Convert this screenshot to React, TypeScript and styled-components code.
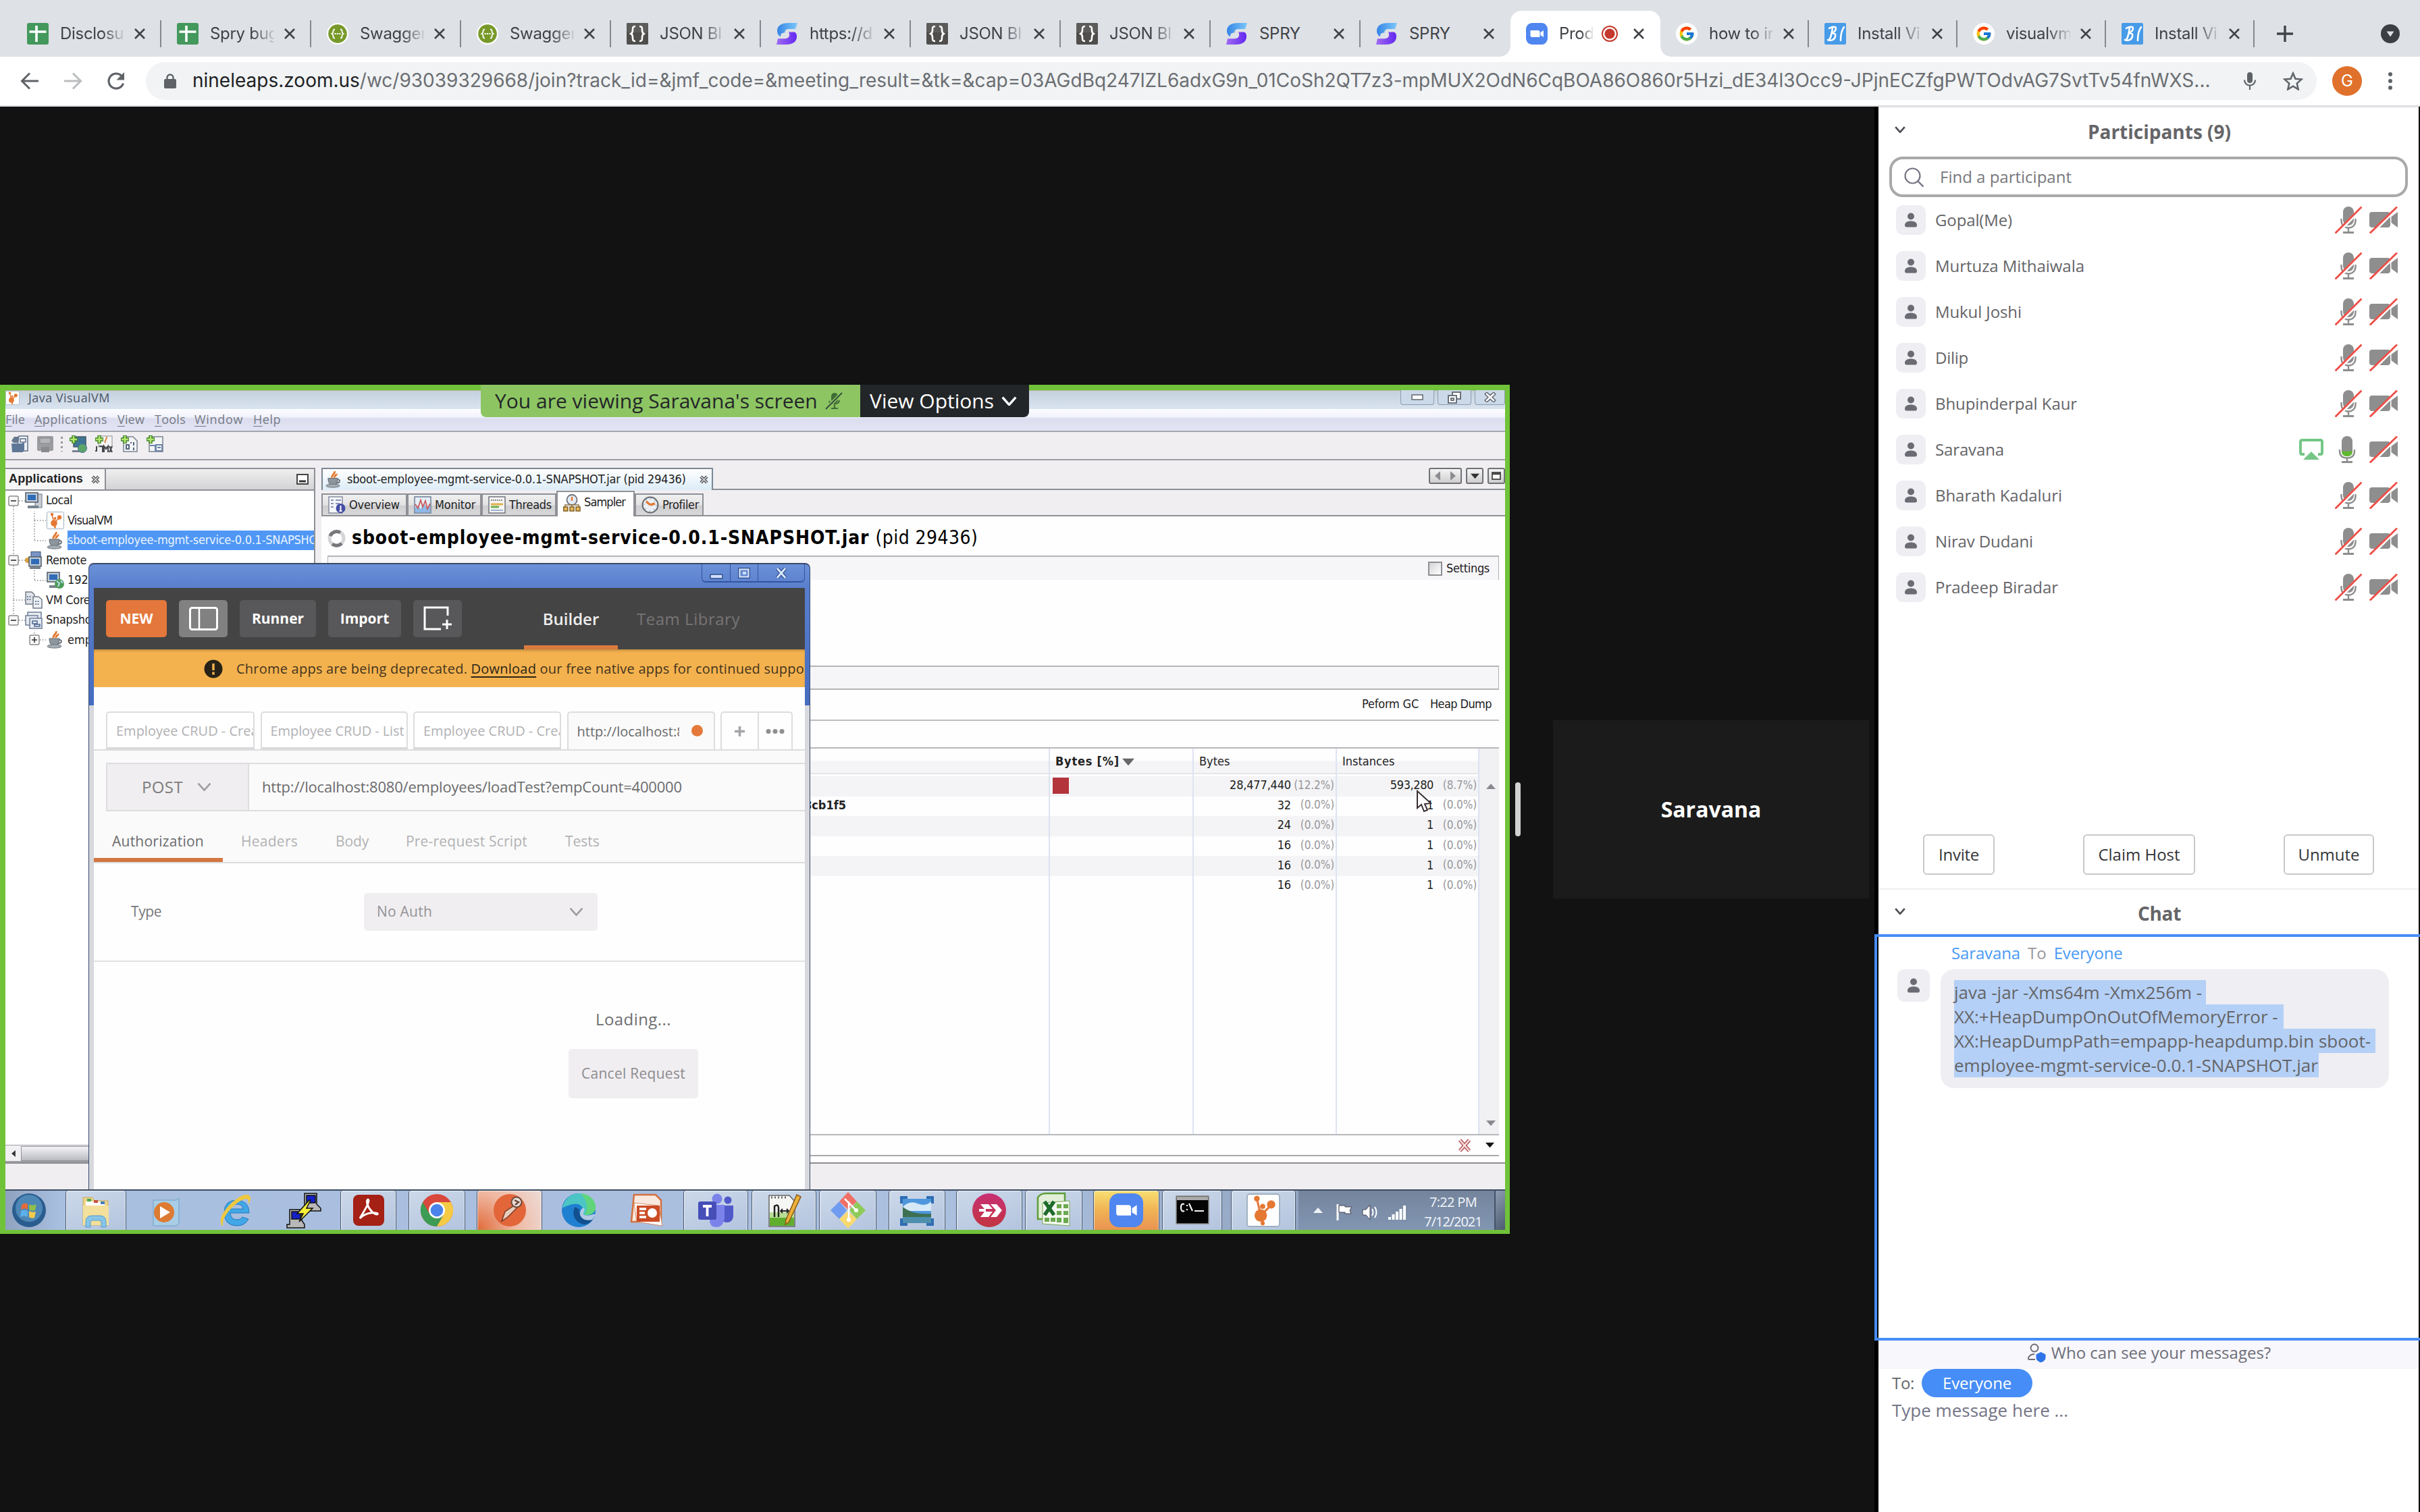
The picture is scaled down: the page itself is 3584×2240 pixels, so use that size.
import React from "react";
import styled, { createGlobalStyle, css } from "styled-components";
import { FcGoogle } from "react-icons/fc";

const OPEN = `"Open Sans", "Noto Sans", sans-serif`;
const CHROME = `Inter, Roboto, sans-serif`;
const SWING = `"DejaVu Sans Condensed", "DejaVu Sans", sans-serif`;
const ARIAL = `"Liberation Sans", Arial, sans-serif`;

const GlobalStyle = createGlobalStyle`
  * { box-sizing: border-box; }
  body { margin: 0; background: #121212; font-family: ${OPEN}; }
  svg { display: block; flex: none; }
`;

/* ---------- shared text ---------- */
const Label = styled.span<{ $size: number; $ls?: number; $weight?: number; $color?: string; $font?: string }>`
  display: inline-block;
  white-space: pre;
  padding-bottom: 2px;
  font-family: ${(p) => p.$font ?? "inherit"};
  font-size: ${(p) => p.$size}px;
  font-weight: ${(p) => p.$weight ?? 400};
  letter-spacing: ${(p) => p.$ls ?? 0}px;
  color: ${(p) => p.$color ?? "inherit"};
`;

/* ---------- browser chrome ---------- */
const Page = styled.div`
  width: 3584px;
  height: 2240px;
  display: flex;
  flex-direction: column;
  overflow: hidden;
  background: #121212;
`;
const TabStrip = styled.div`
  height: 84px;
  flex: none;
  background: #dee1e6;
  display: flex;
  padding: 16px 0 0 17px;
`;
const Tab = styled.div<{ $active?: boolean; $w: number }>`
  position: relative;
  width: ${(p) => p.$w}px;
  height: 68px;
  padding-left: 23px;
  display: flex;
  align-items: center;
  color: #3f4347;
  font-family: ${CHROME};
  ${(p) =>
    p.$active &&
    css`
      background: #fff;
      border-radius: 16px 16px 0 0;
      &::before, &::after {
        content: "";
        position: absolute;
        bottom: 0;
        width: 16px;
        height: 16px;
      }
      &::before { left: -16px; background: radial-gradient(circle at 0 0, transparent 15.5px, #fff 16px); }
      &::after { right: -16px; background: radial-gradient(circle at 100% 0, transparent 15.5px, #fff 16px); }
    `}
`;
const TabText = styled.div<{ $w: number; $fade?: boolean }>`
  width: ${(p) => p.$w}px;
  margin-left: 17px;
  overflow: hidden;
  white-space: pre;
  ${(p) => p.$fade && "mask-image: linear-gradient(90deg, #000 66%, transparent 104%);"}
`;
const TabExtra = styled.div<{ $ml: number }>`
  margin-left: ${(p) => p.$ml}px;
`;
const TabLine = styled.div`
  width: 2px;
  height: 40px;
  background: #85888c;
  margin-left: auto;
`;
const Toolbar = styled.div`
  height: 74px;
  flex: none;
  background: #fff;
  border-bottom: 2px solid #dadce0;
  display: flex;
  align-items: center;
  padding-left: 28px;
`;
const NavIcons = styled.div`
  display: flex;
  gap: 32px;
  width: 188px;
`;
const UrlBar = styled.div`
  width: 3215px;
  height: 56px;
  border-radius: 28px;
  background: #f1f3f4;
  display: flex;
  align-items: center;
  padding-left: 27px;
  font-family: ${CHROME};
  color: #6b6e73;
  b { font-weight: 400; color: #202124; }
`;
const UrlText = styled.div`
  width: 3037px;
  margin-left: 24px;
`;
const UrlStar = styled.div`
  margin-left: 39px;
`;
const Avatar = styled.div`
  width: 44px;
  height: 44px;
  margin: 0 38px 0 23px;
  border-radius: 50%;
  background: #e0712c;
  color: #fff;
  display: grid;
  place-items: center;
  font-family: ${CHROME};
`;

const CloseX = () => (
  <svg width="18" height="18" viewBox="0 0 18 18"><path d="M2 2l14 14M16 2L2 16" stroke="#3f4347" strokeWidth="2.6" /></svg>
);
const SheetIcon = () => (
  <svg width="32" height="32"><rect width="32" height="32" rx="3" fill="#43985c" /><path d="M14 4v24M3.500 13h25" stroke="#fff" strokeWidth="3.600" /></svg>
);
const SwaggerIcon = () => (
  <svg width="32" height="32"><circle cx="16" cy="16" r="16" fill="#fff" /><circle cx="16" cy="16" r="13.800" fill="#78992a" /><path d="M12 9.500c-2.500 0-2.500 1-2.500 3s0 2.500-2 3.500c2 1 2 1.500 2 3.500s0 3 2.500 3M20 9.500c2.500 0 2.500 1 2.500 3s0 2.500 2 3.500c-2 1-2 1.500-2 3.500s0 3-2.500 3" fill="none" stroke="#fff" strokeWidth="1.900" /><path d="M11.500 16h9" stroke="#fff" strokeWidth="2.200" strokeDasharray="2.200 1.200" /></svg>
);
const JsonIcon = () => (
  <svg width="32" height="32"><rect width="32" height="32" rx="2" fill="#4f4e4c" /><rect width="32" height="14" rx="2" fill="#5c5c5a" /><path d="M13 5c-4 0-4 2-4 5.500 0 3.500-.5 4.500-2.500 5.500 2 1 2.500 2 2.500 5.500C9 25 9 27 13 27M19 5c4 0 4 2 4 5.500 0 3.500.5 4.500 2.500 5.500-2 1-2.500 2-2.500 5.500 0 3.500 0 5.500-4 5.500" fill="none" stroke="#fff" strokeWidth="2.600" /></svg>
);
const SpryIcon = () => (
  <svg width="32" height="32" viewBox="0 0 32 32">
    <defs>
      <linearGradient id="sa" x1="0" x2="1"><stop offset="0" stopColor="#3584e4" /><stop offset="1" stopColor="#7cc8fb" /></linearGradient>
      <linearGradient id="sb" x1="0" x2="1"><stop offset="0" stopColor="#a06cf0" /><stop offset="1" stopColor="#6327f2" /></linearGradient>
    </defs>
    <path d="M31 0H18C7 0 1 4 1 12c0 4 2 6.500 5 8.500V19c0-3 2-4.500 6-4.500 1-3 1-5 5-5.500h11z" fill="url(#sa)" />
    <path d="M0 32h14c10 0 16-4 16-12 0-4-1-5.500-3.500-6.500H18c2 3 2 9.500-5 9.700H2z" fill="url(#sb)" />
  </svg>
);
const ZoomIcon = ({ s = 32 }: { s?: number }) => (
  <svg width={s} height={s} viewBox="0 0 32 32"><rect width="32" height="32" rx="9" fill="#4f86f0" /><path d="M6.500 11h11.500a2.500 2.500 0 0 1 2.500 2.500V21H9a2.500 2.500 0 0 1-2.500-2.500zM21.500 14l4.500-3v10l-4.500-3z" fill="#fff" /></svg>
);
const GoogleIcon = () => (
  <svg width="32" height="32"><circle cx="16" cy="16" r="16" fill="#fff" /><g transform="translate(3.500 3.500)"><FcGoogle size={25} /></g></svg>
);
const BlIcon = () => (
  <svg width="32" height="32"><rect width="32" height="32" rx="2" fill="#479be8" /><path d="M7 8c3-2 10-4 10 0 0 3-3 6-6 7 4 0 6 1 5 5-1 5-6 7-11 5M12 7c-1 8-2 14-5 18M29 6c-3 4-5 11-5 20" fill="none" stroke="#fff" strokeWidth="2.600" strokeLinecap="round" /></svg>
);
const RecIcon = () => (
  <svg width="24" height="24"><circle cx="12" cy="12" r="11" fill="none" stroke="#c4392c" strokeWidth="2" /><circle cx="12" cy="12" r="7.600" fill="#c4392c" /></svg>
);

const tabs: { icon: React.ReactNode; text: string; active?: boolean; w?: number; line?: boolean }[] = [
  { icon: <SheetIcon />, text: "Disclosu", line: true },
  { icon: <SheetIcon />, text: "Spry bug", line: true },
  { icon: <SwaggerIcon />, text: "Swagger", line: true },
  { icon: <SwaggerIcon />, text: "Swagger", line: true },
  { icon: <JsonIcon />, text: "JSON Bl", line: true },
  { icon: <SpryIcon />, text: "https://d", line: true },
  { icon: <JsonIcon />, text: "JSON Bl", line: true },
  { icon: <JsonIcon />, text: "JSON Bl", line: true },
  { icon: <SpryIcon />, text: "SPRY", line: true },
  { icon: <SpryIcon />, text: "SPRY" },
  { icon: <ZoomIcon />, text: "Prod", active: true },
  { icon: <GoogleIcon />, text: "how to in", w: 220, line: true },
  { icon: <BlIcon />, text: "Install Vi", w: 220, line: true },
  { icon: <GoogleIcon />, text: "visualvm", w: 220, line: true },
  { icon: <BlIcon />, text: "Install Vi", w: 220, line: true },
];

function BrowserTop() {
  return (
    <>
      <TabStrip>
        {tabs.map((t, i) => (
          <Tab key={i} $active={t.active} $w={t.w ?? 222}>
            {t.icon}
            <TabText $w={t.active ? 50 : 95} $fade={t.text !== "SPRY"}><Label $size={24} $ls={-0.3}>{t.text}</Label></TabText>
            {t.active && <TabExtra $ml={13}><RecIcon /></TabExtra>}
            <TabExtra $ml={t.active ? 22 : 14}><CloseX /></TabExtra>
            {t.line && <TabLine />}
          </Tab>
        ))}
        <Tab $w={200}>
          <TabExtra $ml={9}><svg width="26" height="26" viewBox="0 0 26 26"><path d="M13 1v24M1 13h24" stroke="#3f4347" strokeWidth="3.400" /></svg></TabExtra>
          <TabExtra $ml={129}><svg width="28" height="28" viewBox="0 0 28 28"><circle cx="14" cy="14" r="14" fill="#3b3f44" /><path d="M8.500 10.500h11L14 18.500z" fill="#dee1e6" /></svg></TabExtra>
        </Tab>
      </TabStrip>
      <Toolbar>
        <NavIcons>
          <svg width="32" height="32" viewBox="0 0 32 32"><path d="M29 16H5M16 4.500L4.500 16 16 27.500" fill="none" stroke="#5f6368" strokeWidth="3" /></svg>
          <svg width="32" height="32" viewBox="0 0 32 32"><path d="M3 16h24M16 4.500L27.500 16 16 27.500" fill="none" stroke="#babcbe" strokeWidth="3" /></svg>
          <svg width="32" height="32" viewBox="0 0 32 32"><path d="M26.500 19.500A11 11 0 1 1 23.800 8.200" fill="none" stroke="#5f6368" strokeWidth="3.200" /><path d="M28 3v11.500H16.500z" fill="#5f6368" /></svg>
        </NavIcons>
        <UrlBar>
          <svg width="18" height="22" viewBox="0 0 18 22"><rect x="0" y="8" width="18" height="14" rx="2" fill="#5f6368" /><path d="M4.500 9V6a4.500 4.500 0 0 1 9 0v3" fill="none" stroke="#5f6368" strokeWidth="2.400" /></svg>
          <UrlText>
            <Label $size={28}><b>nineleaps.zoom.us</b>/wc/93039329668/join?track_id=&amp;jmf_code=&amp;meeting_result=&amp;tk=&amp;cap=03AGdBq247lZL6adxG9n_01CoSh2QT7z3-mpMUX2OdN6CqBOA86O860r5Hzi_dE34l3Occ9-JPjnECZfgPWTOdvAG7SvtTv54fnWXS...</Label>
          </UrlText>
          <svg width="20" height="28" viewBox="0 0 20 28"><rect x="6" y="1" width="8" height="16" rx="4" fill="#5f6368" /><path d="M2 12.500a8 8 0 0 0 16 0M10 20.500V27" fill="none" stroke="#5f6368" strokeWidth="2.200" /></svg>
          <UrlStar>
            <svg width="30" height="28" viewBox="0 0 30 28"><path d="M15 2.500l3.500 8.300 9 .8-6.800 6 2 8.800L15 21.700l-7.700 4.700 2-8.800-6.800-6 9-.8z" fill="none" stroke="#5f6368" strokeWidth="2.500" /></svg>
          </UrlStar>
        </UrlBar>
        <Avatar><Label $size={24}>G</Label></Avatar>
        <svg width="8" height="28" viewBox="0 0 8 28"><g fill="#5f6368"><circle cx="4" cy="4" r="3" /><circle cx="4" cy="14" r="3" /><circle cx="4" cy="24" r="3" /></g></svg>
      </Toolbar>
    </>
  );
}

/* ---------- stage ---------- */
const Meeting = styled.div`
  flex: 1;
  display: flex;
  min-height: 0;
`;
const Stage = styled.div`
  width: 2776px;
  display: flex;
  align-items: center;
  background: #121212;
`;
const Handle = styled.div`
  width: 8px;
  height: 80px;
  border-radius: 4px;
  background: #d2d2d2;
  margin-left: 8px;
`;
const Tile = styled.div`
  width: 468px;
  height: 264px;
  margin-left: 48px;
  background: #1b1b1b;
  color: #fff;
  display: grid;
  place-items: center;
`;
const Share = styled.div`
  position: relative;
  width: 2236px;
  height: 1258px;
  flex: none;
  border: solid #70c239;
  border-width: 8px 7px 6px 8px;
`;
const Desktop = styled.div`
  position: relative;
  width: 2221px;
  height: 1244px;
  overflow: hidden;
  display: flex;
  flex-direction: column;
  background: #f0eef1;
  color: #222;
  font-family: ${SWING};
`;
const Banner = styled.div`
  position: absolute;
  top: -8px;
  left: 704px;
  display: flex;
  height: 48px;
  border-radius: 0 0 8px 8px;
  overflow: hidden;
`;
const BannerGreen = styled.div`
  width: 562px;
  background: #8dc563;
  color: #232628;
  display: flex;
  align-items: center;
  padding-left: 21px;
  gap: 11px;
`;
const BannerDark = styled.div`
  width: 250px;
  background: #232628;
  color: #fff;
  display: flex;
  align-items: center;
  padding-left: 14px;
  gap: 11px;
`;

/* ---------- VisualVM ---------- */
const WinTitle = styled.div`
  height: 28px;
  flex: none;
  background: linear-gradient(#c3d0dc, #dae4f1);
  display: flex;
  align-items: center;
  color: #4c5665;
  gap: 13px;
  padding-bottom: 5px;
  box-shadow: inset 0 1px 0 #b4b98a;
`;
const WinButtons = styled.div`
  margin-left: auto;
  display: flex;
  gap: 5px;
  align-self: flex-start;
`;
const WinButton = styled.div<{ $w: number }>`
  width: ${(p) => p.$w}px;
  height: 22px;
  border: 1.5px solid #8c9bb0;
  border-top: 0;
  border-radius: 0 0 4px 4px;
  background: #ccd9e8;
  display: grid;
  place-items: center;
`;
const MenuBar = styled.div`
  height: 34px;
  flex: none;
  display: grid;
  grid-template-columns: 43px 123px 55px 59px 87px 60px;
  align-items: center;
  background: linear-gradient(#fdfdff, #f2f3fb 35%, #dcdef0 45%, #e3e4f4);
  border-bottom: 2px solid #a5a5ac;
  color: #767b85;
  font-family: ${OPEN};
  u { text-underline-offset: 3px; }
`;
const IconBar = styled.div`
  height: 42px;
  flex: none;
  display: flex;
  align-items: center;
  gap: 12px;
  padding: 0 0 4px 8px;
  border-bottom: 2px solid #9d9da3;
`;
const IconDivider = styled.div`
  width: 3px;
  height: 22px;
  margin: 0 -2px;
  background: repeating-linear-gradient(#97979b 0 3px, transparent 3px 7px);
`;
const Body = styled.div`
  height: 1040px;
  flex: none;
  display: flex;
  gap: 9px;
  padding-top: 11px;
`;
const SidePanel = styled.div`
  width: 459px;
  background: #fff;
  border: solid #8e9096;
  border-width: 2px 2px 0 0;
  display: flex;
  flex-direction: column;
`;
const SideHead = styled.div`
  height: 32px;
  flex: none;
  display: flex;
  align-items: center;
  border-bottom: 2px solid #8e9096;
  background: linear-gradient(#efeff0, #d3d3d5);
  padding-right: 8px;
  justify-content: space-between;
`;
const SideTab = styled.div`
  width: 149px;
  height: 30px;
  padding-left: 5px;
  background: #f6f6f7;
  border-right: 2px solid #8e9096;
  display: flex;
  align-items: center;
  gap: 12px;
`;
const Tree = styled.div`
  flex: 1;
`;
const TreeRow = styled.div`
  height: 29.5px;
  display: flex;
  align-items: center;
  overflow: hidden;
`;
const TreeText = styled.div<{ $on?: boolean }>`
  margin-left: 5px;
  flex: 1;
  height: 29px;
  line-height: 28px;
  overflow: hidden;
  white-space: pre;
  background: ${(p) => (p.$on ? "#5097f5" : "transparent")};
  color: ${(p) => (p.$on ? "#eaf4ff" : "#1e1e1e")};
`;
const SideScroll = styled.div`
  height: 26px;
  display: flex;
  align-items: center;
  gap: 6px;
  padding-left: 7px;
  background: #f0f0f3;
  border: solid #9d9da3;
  border-width: 1px 0 2px;
`;
const Thumb = styled.div`
  height: 22px;
  flex: 1;
  border: 1px solid #8f9196;
  background: linear-gradient(#f4f4f6, #b9bbc2);
`;
const MainPanel = styled.div`
  flex: 1;
  display: flex;
  flex-direction: column;
`;
const DocTabs = styled.div`
  height: 33px;
  flex: none;
  display: flex;
  align-items: stretch;
  border-bottom: 2px solid #8e9096;
`;
const DocTab = styled.div`
  width: 580px;
  height: 33px;
  border: solid #7a8794;
  border-width: 2px 2px 0 2px;
  background: linear-gradient(#fff, #dcecf8);
  display: flex;
  align-items: center;
  padding: 0 5px 0 4px;
`;
const DocTitle = styled.div`
  margin: 0 auto 0 7px;
`;
const DocNav = styled.div`
  margin-left: auto;
  display: flex;
  gap: 6px;
`;
const DocBtn = styled.div<{ $w: number }>`
  width: ${(p) => p.$w}px;
  height: 24px;
  border: 2px solid #6f7176;
  border-radius: 3px;
  background: linear-gradient(#f4f4f4, #cfcfd1);
  display: flex;
  align-items: center;
  justify-content: space-around;
`;
const SubTabs = styled.div`
  height: 39px;
  flex: none;
  display: flex;
  align-items: flex-end;
  border-bottom: 2px solid #8e9096;
`;
const SubTab = styled.div<{ $w: number; $on?: boolean }>`
  width: ${(p) => p.$w}px;
  height: ${(p) => (p.$on ? 38 : 32)}px;
  margin-bottom: ${(p) => (p.$on ? -2 : 0)}px;
  border: 2px solid #8e9096;
  border-bottom: 0;
  background: ${(p) => (p.$on ? "#fefefe" : "linear-gradient(#f0f0f0, #e2e2e3 50%, #cfcfd1 55%, #d8d8d9)")};
  display: flex;
  align-items: center;
  gap: 5px;
  padding: 0 0 ${(p) => (p.$on ? 5 : 0)}px 8px;
`;
const Content = styled.div`
  flex: 1;
  background: #fefefe;
  padding: 0 9px;
  display: flex;
  flex-direction: column;
`;
const Heading = styled.div`
  height: 58px;
  display: flex;
  align-items: center;
  gap: 9px;
  color: #000;
  padding-top: 6px;
`;
const GreyBar = styled.div<{ $h: number; $gap: number; $closed?: boolean }>`
  height: ${(p) => p.$h}px;
  margin-bottom: ${(p) => p.$gap}px;
  background: #f6f5f8;
  border: solid #b4b4b8;
  border-width: 2px 1px ${(p) => (p.$closed ? 2 : 0)}px;
  display: flex;
  align-items: center;
  justify-content: flex-end;
  gap: 6px;
  padding-right: 13px;
`;
const CheckBox = styled.div`
  width: 21px;
  height: 21px;
  border: 2px solid #8f9094;
  background: linear-gradient(135deg, #d4d4d6, #fff);
`;
const Actions = styled.div`
  height: 46px;
  border-bottom: 2px solid #bdbdc0;
  display: flex;
  align-items: center;
  justify-content: flex-end;
  gap: 17px;
  padding: 0 11px 1px 0;
  margin-bottom: 39px;
`;
const Table = styled.div`
  height: 575px;
  display: flex;
  border: solid #b8b8bc;
  border-width: 2px 0;
`;
const Cols = styled.div`
  display: flex;
  flex-direction: column;
  width: 1706px;
`;
const Line = styled.div<{ $odd?: boolean; $head?: boolean; $fill?: boolean }>`
  display: grid;
  grid-template-columns: 1070px 213px 212px 211px;
  height: ${(p) => (p.$head ? 41 : 29.6)}px;
  ${(p) => p.$fill && "flex: 1;"}
  background: ${(p) => (p.$odd ? "#f4f4f6" : "#fefefe")};
  ${(p) => p.$head && "background: linear-gradient(#fefefe 40%, #f3f3f6 50%, #f6f6f8 88%, #d8d8dc 90%, #fefefe 94%);"}
`;
const Cell = styled.div<{ $end?: boolean }>`
  display: flex;
  align-items: center;
  gap: ${(p) => (p.$end ? 0 : 4)}px;
  justify-content: ${(p) => (p.$end ? "flex-end" : "flex-start")};
  padding: 0 ${(p) => (p.$end ? 2 : 0)}px 2px 8px;
  border-right: 2px solid #dde3f1;
  overflow: hidden;
`;
const ClassName = styled.div`
  margin-left: 698px;
`;
const Num = styled.div`
  text-align: right;
`;
const Pct = styled.div`
  width: 64px;
  text-align: right;
  color: #97979b;
`;
const RedBlock = styled.div`
  width: 24px;
  height: 24px;
  margin-left: -4px;
  background: #b4343c;
`;
const VScroll = styled.div`
  flex: 1;
  background: #f1f0f3;
  display: flex;
  flex-direction: column;
  justify-content: space-between;
  align-items: center;
  padding: 49px 0 9px 4px;
`;
const FilterRow = styled.div`
  height: 31px;
  display: flex;
  align-items: center;
  justify-content: flex-end;
  gap: 21px;
  padding-right: 7px;
  border-bottom: 2px solid #a8a8ac;
`;
const StatusBar = styled.div`
  height: 40px;
  flex: none;
  border-top: 2px solid #8e8e92;
  background: #f0eef1;
`;
const Pointer = styled.div`
  position: absolute;
  left: 2089px;
  top: 592px;
`;

const Tri = ({ d = "down", c = "#777", s = 14 }: { d?: string; c?: string; s?: number }) => {
  const p: Record<string, string> = { down: "M0 3h14l-7 8z", up: "M0 11h14L7 3z", left: "M11 0v14L3 7z", right: "M3 0v14l8-7z" };
  return <svg width={s} height={s} viewBox="0 0 14 14"><path d={p[d]} fill={c} /></svg>;
};
const GreyX = () => (
  <svg width="13" height="13" viewBox="0 0 13 13"><path d="M2 2l9 9M11 2l-9 9" stroke="#55575b" strokeWidth="4.500" /><path d="M2 2l9 9M11 2l-9 9" stroke="#ddd" strokeWidth="1.500" /></svg>
);
const JavaCup = ({ s = 26 }: { s?: number }) => (
  <svg width={s} height={s} viewBox="0 0 26 26">
    <path d="M14 0c2 4-5 5-4 10M17 4c1 2-4 3-3 6" stroke="#e4792f" strokeWidth="3" fill="none" />
    <path d="M4 11h15c0 6-2 10-5 10H9c-3 0-5-5-5-10z" fill="#8d959d" stroke="#5c646c" />
    <path d="M18 13c6-1 5 6-2 5" fill="none" stroke="#6c747c" strokeWidth="2" />
    <ellipse cx="11.500" cy="22.500" rx="10.500" ry="2.600" fill="#a5adb4" stroke="#6c747c" />
  </svg>
);
const VvmIcon = ({ s = 26 }: { s?: number }) => (
  <svg width={s} height={s} viewBox="0 0 26 26">
    <rect x=".5" y=".5" width="25" height="25" rx="2" fill="#fff" stroke="#9fb0c0" />
    <path d="M8 4l3 13 8-8M11 17l2 6" stroke="#e2793d" strokeWidth="1.600" fill="none" />
    <g fill="#e57832"><circle cx="8" cy="4" r="2.200" /><circle cx="19" cy="8.500" r="3.200" /><circle cx="12.500" cy="10" r="2" /><circle cx="11" cy="17" r="4.800" /><circle cx="12.500" cy="23" r="1.600" /></g>
  </svg>
);
const Monitor = ({ extra }: { extra?: "globe" | "pc" | "net" }) => (
  <svg width="26" height="26" viewBox="0 0 26 26">
    {extra === "pc" && <rect x="15" y="3" width="10" height="20" fill="#c7cdd3" stroke="#6d757d" />}
    {extra === "net" && <g><rect x="9" y="0.500" width="14" height="9" fill="#7a95c8" stroke="#3c4c6a" /><circle cx="4" cy="13" r="4" fill="#d9a03f" /></g>}
    <rect x={extra === "net" ? 6 : 1} y={extra === "net" ? 8 : 1} width="18" height="14" fill="#c2ccd6" stroke="#4c5866" strokeWidth="1.500" />
    <rect x={extra === "net" ? 9 : 4} y={extra === "net" ? 11 : 4} width="12" height="8" fill="#2f6cb8" />
    <path d={extra === "net" ? "M7 23h16v3H7z" : "M4 20h16v4H4z"} fill="#77828d" />
    {extra === "globe" && <g><circle cx="19" cy="18" r="7" fill="#4b9a58" /><path d="M15 14l4 3-2 5M21 13l3 4" stroke="#bfe0f0" strokeWidth="2" fill="none" /></g>}
  </svg>
);
const Pages = () => (
  <svg width="26" height="26" viewBox="0 0 26 26"><path d="M1 1h9l4 4v14H1z" fill="#dfe3e9" stroke="#737c88" strokeWidth="1.500" /><path d="M12 8h8l5 4v13H12z" fill="#eef1f4" stroke="#737c88" strokeWidth="1.500" /><path d="M15 15h7M15 19h7M3 8h7M3 12h7" stroke="#6d7f9b" strokeWidth="2" strokeDasharray="2 1.500" /></svg>
);
const Snaps = () => (
  <svg width="26" height="26" viewBox="0 0 26 26"><g fill="#e6ebf3" stroke="#6f7d96" strokeWidth="1.500"><rect x="4" y="1" width="20" height="14" /><rect x="1" y="6" width="18" height="14" /><rect x="7" y="10" width="18" height="15" /></g><path d="M11 14h7v4h-7zM14 19h8v3h-8z" fill="none" stroke="#4e668f" strokeWidth="1.500" /></svg>
);
const BarIcon = ({ kind }: { kind: number }) => (
  <svg width="26" height="26" viewBox="0 0 26 26">
    {kind === 0 && <g><path d="M1 8l4-6h7l2 3v6H4z" fill="#67788f" /><path d="M12 1h13v22H9z" fill="#eef1f5" stroke="#61728b" strokeWidth="1.500" /><path d="M14 5h8v5h-8z" fill="none" stroke="#61728b" strokeWidth="1.500" /><path d="M1 12h15l4-2v13l-3 2H2z" fill="#5f7797" /></g>}
    {kind === 1 && <g><rect x="1" y="1" width="24" height="22" rx="2" fill="#9c9da1" /><path d="M5 4h16v8H5z" fill="#b4b5b9" stroke="#85868a" /><path d="M7 17h12v8H7z" fill="#8a8b8f" /></g>}
    {kind === 2 && <g><rect x="6" y="2" width="18" height="15" fill="#3c7694" stroke="#47586a" strokeWidth="1.500" /><path d="M4 22h15v3H4z" fill="#77828d" /><circle cx="19" cy="19" r="6.500" fill="#5ba569" stroke="#49709a" /></g>}
    {kind === 3 && <g><rect x="5" y="1" width="20" height="16" fill="#f4f4f4" stroke="#8a8f96" /><path d="M17 2c1 4-4 5-2 9" stroke="#e0813d" strokeWidth="2" fill="none" /><path d="M2 16v7h-2M6 16h5v9M13 25v-9l3 4 3-4v9M21 16l4 9M25 16l-4 9" stroke="#44474b" strokeWidth="2" fill="none" /></g>}
    {kind === 4 && <g><path d="M4 2h14l6 6v16H4z" fill="#f4f5f7" stroke="#7b838e" strokeWidth="1.500" /><path d="M8 14h4v6H8zM19 10v5M19 18v4M14 11h2" stroke="#53667f" strokeWidth="2" fill="none" /></g>}
    {kind === 5 && <g><rect x="4" y="2" width="20" height="22" fill="#f4f5f7" stroke="#7b838e" strokeWidth="1.500" /><path d="M5 15h8v9M14 14h9v9h-9zM16 18h5" stroke="#6a83a8" strokeWidth="1.800" fill="none" /></g>}
    {kind > 1 && <path d="M6 0v12M0 6h12" stroke="#3f8428" strokeWidth="5.500" />}
    {kind > 1 && <path d="M6 1v10M1 6h10" stroke="#b6e86e" strokeWidth="2.500" />}
  </svg>
);
const SubIcon = ({ kind }: { kind: number }) => (
  <svg width="26" height="26" viewBox="0 0 26 26">
    {kind === 0 && <g><rect x="1" y="1" width="20" height="24" fill="#f5f6fa" stroke="#858ca0" strokeWidth="1.500" /><path d="M4 6h4M4 11h4M4 16h4M11 6h8M11 11h6" stroke="#8a94b4" strokeWidth="2" /><circle cx="18.500" cy="18" r="7" fill="#454ea4" /><path d="M18.500 14v8M16.500 22h4" stroke="#fff" strokeWidth="2" /></g>}
    {kind === 1 && <g><rect x="1" y="1" width="24" height="24" fill="#e5eef6" stroke="#6c7f98" strokeWidth="1.500" /><path d="M2 24V17l4-3 4 5 5-8 4 6 5-5v12z" fill="#8fb9e8" /><path d="M2 12l4 6 4-12 3 10 4-9 3 12 4-8" stroke="#cc5a5a" strokeWidth="1.800" fill="none" /></g>}
    {kind === 2 && <g><rect x="1" y="1" width="24" height="24" fill="#f5f5f5" stroke="#70747c" strokeWidth="1.500" /><path d="M4 6h18" stroke="#888" strokeWidth="2" strokeDasharray="2 1" /><path d="M4 12h18" stroke="#e3b04a" strokeWidth="3" /><path d="M4 16h12" stroke="#6fae4e" strokeWidth="3" /><path d="M4 21h18" stroke="#9bb4cc" strokeWidth="2" /></g>}
    {kind === 3 && <g><circle cx="13" cy="8.500" r="7.500" fill="#e3ecf5" stroke="#70747c" strokeWidth="1.800" /><path d="M13 4v6" stroke="#e07b36" strokeWidth="2.500" /><path d="M3 19v-3h20v3M13 15v4" stroke="#8e744a" strokeWidth="1.600" fill="none" /><g fill="#e7b95e" stroke="#806024" strokeWidth="1.500"><rect x="0.800" y="19" width="6" height="6" /><rect x="10" y="19" width="6" height="6" /><rect x="19" y="19" width="6" height="6" /></g></g>}
    {kind === 4 && <g><circle cx="13" cy="13" r="11.500" fill="#eaf0f6" stroke="#66696f" strokeWidth="2" /><path d="M13 13L7 8M13 13l7-2" stroke="#e07b36" strokeWidth="3.500" /><circle cx="13" cy="13" r="9" fill="none" stroke="#9ba4ae" strokeWidth="1.500" strokeDasharray="1.500 5.500" /></g>}
  </svg>
);
const Guide = ({ kind, up, down, spine }: { kind: "box" | "plain" | "leaf" | "leafbox"; up?: boolean; down?: boolean; spine?: boolean }) => {
  const leaf = kind === "leaf" || kind === "leafbox";
  const x = leaf ? 43 : 12;
  return (
    <svg width={leaf ? 61 : 29} height="30" viewBox={`0 0 ${leaf ? 61 : 29} 30`}>
      <g stroke="#8a8a8e" strokeWidth="1.500" strokeDasharray="1.500 2.500" fill="none">
        {leaf && spine && <path d="M12 0v30" />}
        {up && <path d={`M${x} 0v15`} />}
        {down && <path d={`M${x} 15v15`} />}
        <path d={`M${x} 15h17`} />
      </g>
      {(kind === "box" || kind === "leafbox") && (
        <g><rect x={x - 7} y="8" width="14" height="14" rx="2" fill="#f8f8f8" stroke="#8a8a8e" strokeWidth="1.500" /><path d={kind === "box" ? `M${x - 4} 15h8` : `M${x - 4} 15h8M${x} 11v8`} stroke="#333" strokeWidth="1.600" /></g>
      )}
    </svg>
  );
};

const treeRows = [
  { g: <Guide kind="box" down />, i: <Monitor extra="pc" />, t: "Local", ls: -0.59 },
  { g: <Guide kind="leaf" spine up down />, i: <VvmIcon />, t: "VisualVM", ls: -0.9 },
  { g: <Guide kind="leaf" spine up />, i: <JavaCup />, t: "sboot-employee-mgmt-service-0.0.1-SNAPSHOT", on: true, ls: -0.24 },
  { g: <Guide kind="box" up down />, i: <Monitor extra="net" />, t: "Remote", ls: -0.4 },
  { g: <Guide kind="leaf" spine up />, i: <Monitor extra="globe" />, t: "192" },
  { g: <Guide kind="plain" up down />, i: <Pages />, t: "VM Core", ls: -0.3 },
  { g: <Guide kind="box" up />, i: <Snaps />, t: "Snapsho", ls: -0.3 },
  { g: <Guide kind="leafbox" up />, i: <JavaCup />, t: "emp" },
];
const dataRows = [
  ["28,477,440", "(12.2%)", "593,280", "(8.7%)"],
  ["32", "(0.0%)", "1", "(0.0%)"],
  ["24", "(0.0%)", "1", "(0.0%)"],
  ["16", "(0.0%)", "1", "(0.0%)"],
  ["16", "(0.0%)", "1", "(0.0%)"],
  ["16", "(0.0%)", "1", "(0.0%)"],
];
const menuItems: [string, number][] = [["File", 0.1], ["Applications", 0.45], ["View", 0.16], ["Tools", 0.26], ["Window", 0.67], ["Help", 0.5]];
const subTabs: [string, number, number][] = [["Overview", 127, -0.16], ["Monitor", 110, -0.2], ["Threads", 111, -0.29], ["Sampler", 116, -0.9], ["Profiler", 102, -0.37]];

function VisualVm() {
  return (
    <>
      <WinTitle>
        <VvmIcon s={21} />
        <Label $size={18} $font={OPEN} $ls={0.47}>Java VisualVM</Label>
        <WinButtons>
          <WinButton $w={50}><svg width="18" height="9"><rect x="1" y="1" width="16" height="7" fill="#fff" stroke="#5f6670" strokeWidth="1.500" /></svg></WinButton>
          <WinButton $w={50}><svg width="20" height="18" viewBox="0 0 20 18"><g fill="#fff" stroke="#5f6670" strokeWidth="1.800"><rect x="7" y="1" width="12" height="10" /><rect x="1" y="6" width="12" height="11" /><rect x="5" y="10" width="4" height="3" /></g></svg></WinButton>
          <WinButton $w={45}><svg width="18" height="15" viewBox="0 0 18 15"><path d="M2 1l14 13M16 1L2 14" stroke="#5f6670" strokeWidth="5.500" /><path d="M3 2l12 11M15 2L3 13" stroke="#fff" strokeWidth="2.500" /></svg></WinButton>
        </WinButtons>
      </WinTitle>
      <MenuBar>
        {menuItems.map(([m, ls]) => (
          <div key={m}><Label $size={18} $ls={ls}><u>{m[0]}</u>{m.slice(1)}</Label></div>
        ))}
      </MenuBar>
      <IconBar>
        <BarIcon kind={0} />
        <BarIcon kind={1} />
        <IconDivider />
        <BarIcon kind={2} /><BarIcon kind={3} /><BarIcon kind={4} /><BarIcon kind={5} />
      </IconBar>
      <Body>
        <SidePanel>
          <SideHead>
            <SideTab><Label $size={18} $weight={700} $font={ARIAL} $ls={0.17}>Applications</Label><GreyX /></SideTab>
            <svg width="18" height="16"><rect x="1" y="1" width="16" height="14" fill="#fff" stroke="#444" strokeWidth="2" /><path d="M4 11h10" stroke="#333" strokeWidth="3" /></svg>
          </SideHead>
          <Tree>
            {treeRows.map((r) => (
              <TreeRow key={r.t}>
                {r.g}{r.i}
                <TreeText $on={r.on}><Label $size={18} $ls={r.ls}>{r.t}</Label></TreeText>
              </TreeRow>
            ))}
          </Tree>
          <SideScroll><Tri d="left" c="#333" s={10} /><Thumb /></SideScroll>
        </SidePanel>
        <MainPanel>
          <DocTabs>
            <DocTab>
              <JavaCup s={25} />
              <DocTitle><Label $size={18} $ls={-0.2}>sboot-employee-mgmt-service-0.0.1-SNAPSHOT.jar (pid 29436)</Label></DocTitle>
              <GreyX />
            </DocTab>
            <DocNav>
              <DocBtn $w={49}><Tri d="left" c="#8c8c90" /><Tri d="right" c="#8c8c90" /></DocBtn>
              <DocBtn $w={26}><Tri c="#333" s={13} /></DocBtn>
              <DocBtn $w={26}><svg width="14" height="12"><rect x="1" y="1" width="12" height="10" fill="#fff" stroke="#444" strokeWidth="1.800" /><path d="M1 3h12" stroke="#444" strokeWidth="2.500" /></svg></DocBtn>
            </DocNav>
          </DocTabs>
          <SubTabs>
            {subTabs.map(([t, w, ls], i) => (
              <SubTab key={t} $w={w} $on={i === 3}><SubIcon kind={i} /><Label $size={18} $ls={ls}>{t}</Label></SubTab>
            ))}
          </SubTabs>
          <Content>
            <Heading>
              <svg width="27" height="27" viewBox="0 0 27 27"><circle cx="13.500" cy="13.500" r="10.500" fill="none" stroke="#d5d5d8" strokeWidth="5" /><path d="M4 10a10.500 10.500 0 0 1 15-5M21 21a10.500 10.500 0 0 1-14 1" fill="none" stroke="#77777b" strokeWidth="5" /></svg>
              <Label $size={28} $weight={700} $ls={0.92}>sboot-employee-mgmt-service-0.0.1-SNAPSHOT.jar</Label>
              <Label $size={28} $ls={0.45}>(pid 29436)</Label>
            </Heading>
            <GreyBar $h={36} $gap={127}><CheckBox /><Label $size={18} $ls={-0.3}>Settings</Label></GreyBar>
            <GreyBar $h={36} $gap={0} $closed />
            <Actions><Label $size={18} $ls={-0.2}>Peform GC</Label><Label $size={18} $ls={-0.59}>Heap Dump</Label></Actions>
            <Table>
              <Cols>
                <Line $head>
                  <Cell />
                  <Cell><Label $size={18} $weight={700} $ls={0.78}>Bytes [%]</Label><Tri s={18} c="#666" /></Cell>
                  <Cell><Label $size={18}>Bytes</Label></Cell>
                  <Cell><Label $size={18}>Instances</Label></Cell>
                </Line>
                {dataRows.map((r, i) => (
                  <Line key={i} $odd={i % 2 === 0}>
                    <Cell>{i === 1 && <ClassName><Label $size={18} $weight={700}>8cb1f5</Label></ClassName>}</Cell>
                    <Cell>{i === 0 && <RedBlock />}</Cell>
                    <Cell $end><Num><Label $size={18} $ls={-0.17}>{r[0]}</Label></Num><Pct><Label $size={17} $ls={-0.1}>{r[1]}</Label></Pct></Cell>
                    <Cell $end><Num><Label $size={18} $ls={-0.4}>{r[2]}</Label></Num><Pct><Label $size={17} $ls={-0.1}>{r[3]}</Label></Pct></Cell>
                  </Line>
                ))}
                <Line $fill><Cell /><Cell /><Cell /><Cell /></Line>
              </Cols>
              <VScroll><Tri d="up" c="#8a8a8e" /><Tri c="#8a8a8e" /></VScroll>
            </Table>
            <FilterRow>
              <svg width="20" height="20" viewBox="0 0 20 20"><path d="M3 2l14 16M17 2L3 18" stroke="#b3565a" strokeWidth="5.500" /><path d="M3 2l14 16M17 2L3 18" stroke="#f8dede" strokeWidth="2.500" /></svg>
              <Tri c="#111" s={13} />
            </FilterRow>
          </Content>
        </MainPanel>
      </Body>
      <StatusBar />
    </>
  );
}

/* ---------- Postman window ---------- */
const PmWindow = styled.div`
  position: absolute;
  left: 123px;
  top: 256px;
  width: 1069px;
  height: 928px;
  padding: 0 7px;
  border: solid #3a4a6b;
  border-width: 2px 1px 0;
  border-radius: 8px 8px 0 0;
  background: linear-gradient(#6b91d8, #597ecd 36px, #456cbf 209px, #d7d9de 209px);
  overflow: hidden;
  font-family: ${OPEN};
  display: flex;
  flex-direction: column;
`;
const PmTitle = styled.div`
  height: 35px;
  flex: none;
  display: flex;
  justify-content: flex-end;
`;
const PmWinButtons = styled.div`
  height: 27px;
  display: flex;
  border: solid #34559c;
  border-width: 0 1px 2px;
  border-radius: 0 0 6px 6px;
`;
const PmWinButton = styled.div<{ $w: number }>`
  width: ${(p) => p.$w}px;
  display: grid;
  place-items: center;
  & + & { border-left: 1.5px solid #34559c; }
`;
const PmHeader = styled.div`
  height: 91px;
  flex: none;
  background: #454444;
  display: flex;
  align-items: center;
  gap: 18px;
  padding-left: 18px;
  color: #fff;
`;
const PmButton = styled.div<{ $w: number; $bg: string }>`
  width: ${(p) => p.$w}px;
  height: 55px;
  border-radius: 5px;
  background: ${(p) => p.$bg};
  display: grid;
  place-items: center;
`;
const PmTop = styled.div<{ $w: number; $on?: boolean; $ml?: number }>`
  width: ${(p) => p.$w}px;
  height: 91px;
  margin-left: ${(p) => p.$ml ?? 0}px;
  display: grid;
  place-items: center;
  color: ${(p) => (p.$on ? "#eee" : "#767575")};
  border-bottom: 6px solid ${(p) => (p.$on ? "#da7a3d" : "transparent")};
  border-top: 8px solid transparent;
`;
const Notice = styled.div`
  height: 56px;
  flex: none;
  background: #f4b24e;
  box-shadow: inset 0 3px 4px -2px #a97f3a;
  color: #43341e;
  display: flex;
  align-items: center;
  gap: 20px;
  padding: 2px 0 0 163px;
  overflow: hidden;
  u { color: #2b2417; text-underline-offset: 4px; }
`;
const PmTabs = styled.div`
  height: 94px;
  flex: none;
  background: #fefefe;
  border-bottom: 2px solid #dcdcde;
  display: flex;
  align-items: flex-end;
  gap: 8.5px;
  padding-left: 18px;
`;
const PmTab = styled.div<{ $w: number; $on?: boolean }>`
  width: ${(p) => p.$w}px;
  height: 56px;
  border: 2px solid #dddde0;
  border-bottom: ${(p) => (p.$on ? "0" : "3px solid #d9d9db")};
  border-radius: 5px 5px 0 0;
  background: ${(p) => (p.$on ? "#fafafa" : "#fff")};
  color: ${(p) => (p.$on ? "#6a6a6c" : "#b1b1b4")};
  display: flex;
  align-items: center;
  padding: 3px 0 0 13px;
  overflow: hidden;
`;
const PmTabClip = styled.div`
  width: 151px;
  overflow: hidden;
`;
const Dot = styled.div`
  width: 17px;
  height: 17px;
  margin: 0 0 4px 18px;
  border-radius: 50%;
  background: #e5793b;
`;
const PmPair = styled.div`
  width: 107px;
  height: 56px;
  border: 2px solid #dddde0;
  border-bottom: 0;
  border-radius: 5px 5px 0 0;
  display: grid;
  grid-template-columns: 53px 1fr;
  div { display: grid; place-items: center; }
  div + div { border-left: 2px solid #dddde0; }
`;
const Request = styled.div`
  background: #fafafa;
  height: 167px;
  flex: none;
  padding: 18px 0 0 18px;
  border-bottom: 2px solid #dcdcde;
  display: flex;
  flex-direction: column;
`;
const UrlRow = styled.div`
  height: 72px;
  flex: none;
  border: 2px solid #dddddf;
  border-right: 0;
  display: flex;
`;
const Method = styled.div`
  width: 210px;
  background: #f0eef0;
  border-right: 2px solid #dddddf;
  color: #7d7c7e;
  display: flex;
  align-items: center;
  padding-left: 51px;
  gap: 21px;
`;
const UrlValue = styled.div`
  padding-left: 19px;
  color: #6b6b6d;
  line-height: 66px;
`;
const ReqTabs = styled.div`
  height: 75px;
  margin-left: -18px;
  display: flex;
  align-items: center;
  color: #b2b2b4;
`;
const ReqTab = styled.div<{ $w: number; $on?: boolean }>`
  width: ${(p) => p.$w}px;
  height: 75px;
  line-height: 88px;
  ${(p) => p.$on && "color: #6b6b6d; border-bottom: 6px solid #d4763f; padding-left: 27px; margin-right: 27px;"}
`;
const Auth = styled.div`
  height: 146px;
  flex: none;
  background: #fefefe;
  border-bottom: 2px solid #e2e2e4;
  display: flex;
  align-items: center;
  padding-left: 55px;
  color: #77777a;
`;
const AuthLabel = styled.div`
  width: 345px;
`;
const Select = styled.div`
  width: 346px;
  height: 56px;
  border-radius: 5px;
  background: #f0eef1;
  color: #949396;
  display: flex;
  align-items: center;
  justify-content: space-between;
  padding: 0 21px 0 19px;
`;
const Loading = styled.div`
  flex: 1;
  background: #fefefe;
  padding: 63px 0 0 703px;
  display: flex;
  flex-direction: column;
  align-items: flex-start;
  color: #6e6e70;
`;
const LoadText = styled.div`
  width: 192px;
  height: 44px;
  display: grid;
  place-items: center;
`;
const Cancel = styled.div`
  width: 192px;
  height: 73px;
  margin-top: 22px;
  border-radius: 5px;
  background: #f0eef1;
  color: #8c8b8e;
  display: grid;
  place-items: center;
`;
const Chev = ({ c = "#9b9a9d", w = 21, sw = 2.4 }: { c?: string; w?: number; sw?: number }) => (
  <svg width={w} height={w * 0.65} viewBox="0 0 20 13"><path d="M1.500 1.500L10 11l8.500-9.500" fill="none" stroke={c} strokeWidth={sw} /></svg>
);

function Postman() {
  return (
    <PmWindow>
      <PmTitle>
        <PmWinButtons>
          <PmWinButton $w={41}><svg width="20" height="20"><rect x="1" y="12" width="18" height="6" rx="1" fill="#cfe0fa" stroke="#2f4d8c" strokeWidth="1.500" /></svg></PmWinButton>
          <PmWinButton $w={41}><svg width="18" height="16"><rect x="2" y="2" width="14" height="12" fill="none" stroke="#2f4d8c" strokeWidth="4" /><rect x="2.500" y="2.500" width="13" height="11" fill="none" stroke="#cfe0fa" strokeWidth="2.400" /><rect x="7" y="6" width="5" height="4" fill="#cfe0fa" /></svg></PmWinButton>
          <PmWinButton $w={69}><svg width="18" height="16" viewBox="0 0 18 16"><path d="M3 1l12 14M15 1L3 15" stroke="#2f4d8c" strokeWidth="5.500" /><path d="M3 1l12 14M15 1L3 15" stroke="#d8e6fb" strokeWidth="3" /></svg></PmWinButton>
        </PmWinButtons>
      </PmTitle>
      <PmHeader>
        <PmButton $w={90} $bg="#e4773b"><Label $size={21} $weight={700}>NEW</Label></PmButton>
        <PmButton $w={72} $bg="#828181"><svg width="43" height="35"><rect x="1.500" y="1.500" width="40" height="32" rx="3" fill="none" stroke="#fff" strokeWidth="3" /><path d="M15 2v31" stroke="#fff" strokeWidth="2.500" /></svg></PmButton>
        <PmButton $w={113} $bg="#585759"><Label $size={21} $weight={700}>Runner</Label></PmButton>
        <PmButton $w={108} $bg="#585759"><Label $size={21} $weight={700}>Import</Label></PmButton>
        <PmButton $w={72} $bg="#585759"><svg width="42" height="38" viewBox="0 0 42 38"><path d="M36 14V2H2v32h24M28 27h14M35 20v14" fill="none" stroke="#fff" strokeWidth="3" /></svg></PmButton>
        <PmTop $w={139} $on $ml={74}><Label $size={24} $weight={600}>Builder</Label></PmTop>
        <PmTop $w={173}><Label $size={24} $ls={0.52}>Team Library</Label></PmTop>
      </PmHeader>
      <Notice>
        <svg width="28" height="28"><circle cx="14" cy="14" r="13.500" fill="#272217" /><path d="M14 6v10M14 18.500v4" stroke="#f4b24e" strokeWidth="3.500" /></svg>
        <Label $size={20} $ls={0.23}>Chrome apps are being deprecated. <u>Download</u> our free native apps for continued suppo</Label>
      </Notice>
      <PmTabs>
        <PmTab $w={220}><Label $size={20}>Employee CRUD - Crea</Label></PmTab>
        <PmTab $w={218}><Label $size={20} $ls={-0.08}>Employee CRUD - List</Label></PmTab>
        <PmTab $w={219}><Label $size={20}>Employee CRUD - Crea</Label></PmTab>
        <PmTab $w={219} $on><PmTabClip><Label $size={20}>http://localhost:8</Label></PmTabClip><Dot /></PmTab>
        <PmPair>
          <div><svg width="15" height="15"><path d="M7.500 0v15M0 7.500h15" stroke="#a5a4a7" strokeWidth="3.500" /></svg></div>
          <div><svg width="28" height="7"><g fill="#8f8e91"><circle cx="4" cy="3.500" r="3.500" /><circle cx="14" cy="3.500" r="3.500" /><circle cx="24" cy="3.500" r="3.500" /></g></svg></div>
        </PmPair>
      </PmTabs>
      <Request>
        <UrlRow>
          <Method><Label $size={24} $ls={0.38}>POST</Label><Chev /></Method>
          <UrlValue><Label $size={22} $ls={-0.2}>http://localhost:8080/employees/loadTest?empCount=400000</Label></UrlValue>
        </UrlRow>
        <ReqTabs>
          <ReqTab $w={191} $on><Label $size={21} $ls={0.24}>Authorization</Label></ReqTab>
          <ReqTab $w={140}><Label $size={21} $ls={0.26}>Headers</Label></ReqTab>
          <ReqTab $w={104}><Label $size={21} $ls={-0.1}>Body</Label></ReqTab>
          <ReqTab $w={236}><Label $size={21} $ls={0.2}>Pre-request Script</Label></ReqTab>
          <ReqTab $w={80}><Label $size={21}>Tests</Label></ReqTab>
        </ReqTabs>
      </Request>
      <Auth>
        <AuthLabel><Label $size={21} $ls={-0.4}>Type</Label></AuthLabel>
        <Select><Label $size={21} $ls={0.23}>No Auth</Label><Chev /></Select>
      </Auth>
      <Loading>
        <LoadText><Label $size={24} $ls={0.43}>Loading...</Label></LoadText>
        <Cancel><Label $size={21} $ls={0.27}>Cancel Request</Label></Cancel>
      </Loading>
    </PmWindow>
  );
}

/* ---------- taskbar ---------- */
const Taskbar = styled.div`
  height: 60px;
  flex: none;
  display: flex;
  align-items: stretch;
  border-top: 2px solid #3e4c60;
  background: linear-gradient(90deg, #8fa3bf 0, #a9bfe0 80px, #abbfde 1500px, #8fa2bf 1950px);
`;
const Slot = styled.div<{ $w: number; $kind?: "open" | "hot" | "gold"; $ml?: number }>`
  width: ${(p) => p.$w}px;
  flex: none;
  margin-left: ${(p) => p.$ml ?? 0}px;
  display: grid;
  place-items: center;
  ${(p) => p.$kind && "border: solid #46566d; border-width: 0 1.500px; border-radius: 4px 4px 0 0; box-shadow: inset 1px 1px 0 #ffffffaa, inset -1px 0 0 #ffffff88;"}
  background: ${(p) =>
    p.$kind === "open" ? "linear-gradient(160deg, #cdd9ea, #b3c4de)" : p.$kind === "hot" ? "radial-gradient(circle at 0 100%, #e06a3a, #f0b8a2 50%, #ecdcd8)" : p.$kind === "gold" ? "linear-gradient(#f8df73, #f0b354 50%, #ea9352)" : "transparent"};
`;
const Tray = styled.div`
  margin-left: 4px;
  flex: 1;
  display: flex;
  align-items: center;
  background: linear-gradient(#74849c, #8296b2);
  color: #f4f7fb;
  padding-left: 22px;
`;
const TrayIcons = styled.div`
  display: flex;
  align-items: center;
  gap: 13px;
  margin: 6px 22px 0 19px;
`;
const Clock = styled.div`
  width: 96px;
  padding-top: 6px;
  text-align: center;
  line-height: 27px;
  font-family: ${OPEN};
`;
const ShowDesk = styled.div`
  width: 16px;
  align-self: stretch;
  margin-left: auto;
  background: linear-gradient(135deg, #8d9cb2, #4e5c70);
  border-left: 2px solid #455369;
`;

const AppIcon = ({ k }: { k: string }) => (
  <svg width="54" height="54" viewBox="0 0 54 54">
    {k === "start" && <g><circle cx="27" cy="27" r="25" fill="#2a5d8f" /><circle cx="27" cy="24" r="20" fill="#4d87b6" /><path d="M16 19q5-4 9-1v8q-4-3-10 0z" fill="#e5693a" /><path d="M27 18q5 3 11 0l-2 9q-5 2-9-1z" fill="#8fc04b" /><path d="M15 28q5-3 10 0v9q-5-3-11 0z" fill="#5cb0e8" /><path d="M27 28q5 3 10 1l-2 9q-4 2-8-1z" fill="#f5cb4b" /></g>}
    {k === "explorer" && <g><path d="M8 8h14l3 5h20v36H8z" fill="#ecd589" stroke="#c9ab58" /><path d="M12 14h28v6H12z" fill="#fff" /><path d="M14 10h6v4h-6z" fill="#4ba84f" /><path d="M24 12h6v4h-6z" fill="#c94f3e" /><path d="M34 14h6v4h-6z" fill="#427fc0" /><path d="M8 20h38v29H8z" fill="#f3e09c" /><path d="M12 52v-8q0-9 9-9h12q9 0 9 9v8h-7v-7q0-3-3-3h-10q-3 0-3 3v7z" fill="#86c4e8" stroke="#5a9fc9" /></g>}
    {k === "wmp" && <g><path d="M8 12h34l4-3v38l-4 3H8z" fill="#a8cde6" stroke="#6f9fc4" /><circle cx="24" cy="30" r="15" fill="#dd7b33" /><path d="M18 21l15 9-15 9z" fill="#fff" /></g>}
    {k === "ie" && <g><path d="M47 31H19q1 10 10 10 6 0 8-4l9 3q-5 10-17 10-19 0-19-20 0-18 19-18 18 1 18 19zM19 25h19q-1-7-9-7t-10 7z" fill="#41a7e6" stroke="#2679bd" /><path d="M6 49Q0 36 22 15 42-1 48 6q3 4-2 12 1-8-4-8Q31 12 16 29 5 44 9 50z" fill="#efc840" /></g>}
    {k === "putty" && <g stroke="#111" strokeWidth="1.500"><path d="M28 2h18v16l6 6v4H28z" fill="#b8b8b8" /><rect x="31" y="5" width="13" height="11" fill="#1521c8" /><path d="M6 26h18v16l4 6v5H2v-5h4z" fill="#b8b8b8" /><rect x="9" y="29" width="13" height="11" fill="#1521c8" /><path d="M35 12L17 32h9l-6 12 20-20h-9l6-12z" fill="#f5ee3a" /></g>}
    {k === "pdf" && <g><rect x="4" y="4" width="46" height="46" rx="8" fill="#a52015" /><path d="M14 39c4-8 12-18 13-26 0-4-4-2-2 5 3 9 11 16 15 15 3-3-16-5-26 6z" fill="none" stroke="#fff" strokeWidth="2.800" /></g>}
    {k === "chrome" && <g><circle cx="27" cy="27" r="24" fill="#d8483c" /><path d="M6.200 15A24 24 0 0 0 27 51l10.400-18-20.800 0z" fill="#3c9c54" /><path d="M47.800 15A24 24 0 0 1 27 51l10.400-18L27 15z" fill="#f5ca45" /><circle cx="27" cy="27" r="12" fill="#fff" /><circle cx="27" cy="27" r="9.300" fill="#4a84ea" /></g>}
    {k === "postman" && <g><circle cx="27" cy="27" r="24" fill="#e2663a" /><path d="M15 43l5-14 15-10 3 4-14 14z" fill="#e8cdbf" stroke="#7a3a22" strokeWidth="1.500" /><circle cx="37" cy="15" r="7.500" fill="#e9ded8" stroke="#6d4a3c" strokeWidth="2" /><path d="M34 12l6 3-5 4" stroke="#6d4a3c" strokeWidth="2.500" fill="none" /></g>}
    {k === "edge" && <g><circle cx="27" cy="27" r="25" fill="#1f7fd0" /><path d="M3 24C5 10 17 2 28 2c14 0 25 10 24 22-1 8-9 11-16 10-4-1-2-3-2-7-1-8-9-11-16-9-8 2-13 4-15 6z" fill="#4cc6c4" /><path d="M30 2c14 1 23 11 22 22-1 8-9 11-16 10 6-12 3-22-6-32z" fill="#66d86a" opacity=".8" /><path d="M22 22c-6 8-2 24 14 26 6-1 10-4 12-8-8 3-22 0-20-14z" fill="#125090" /><path d="M35 24c2 4-2 7-1 9 3 2 8 2 14 0l4 0-5 8c-10 3-19-3-18-10 1-5 3-8 6-7z" fill="#b4c9e4" /></g>}
    {k === "ppt" && <g><path d="M8 4h32l8 8v32H4z" fill="#f9e9df" stroke="#d3703f" strokeWidth="2.500" /><path d="M8 16l36 4 6 30-38-6z" fill="#fff" stroke="#d58c66" /><rect x="12" y="20" width="34" height="24" fill="#cb4b23" /><circle cx="35" cy="31" r="7" fill="#fff" /><path d="M16 25h10M16 31h8M16 37h10" stroke="#fff" strokeWidth="3.500" /></g>}
    {k === "teams" && <g><circle cx="29" cy="10" r="7.500" fill="#7b83eb" /><circle cx="45" cy="12" r="5.500" fill="#5059c9" /><path d="M36 20h17v17q-2 8-9 8t-8-6z" fill="#5059c9" /><path d="M18 19h22v20q-2 13-12 13T18 42z" fill="#7b83eb" /><rect x="1" y="14" width="27" height="27" rx="3" fill="#464eb8" /><path d="M8 21h13M14.500 21v15" stroke="#fff" strokeWidth="3.800" /></g>}
    {k === "npp" && <g><path d="M5 5h30l8 9v37H5z" fill="#f6f6f4" stroke="#666" strokeWidth="1.500" /><path d="M6 30h36v20H6z" fill="#5fae2d" /><path d="M6 30h36v8H6z" fill="#b8de96" /><path d="M13 37V21q6-4 6 3v13" fill="none" stroke="#222" strokeWidth="2.500" /><path d="M22 28h12M25 25l-3 3 3 3M31 25l3 3-3 3" fill="none" stroke="#222" strokeWidth="1.800" /><path d="M46 4l6 3-18 38-5 3 1-7z" fill="#ecb13a" stroke="#8a5a1c" strokeWidth="1.500" /><path d="M8 8h24" stroke="#666" strokeWidth="3" strokeDasharray="2 3" /></g>}
    {k === "git" && <g><path d="M27 0l13 14-13 12-13-12z" fill="#ef6f67" /><path d="M40 14l13 13-13 13-11-13z" fill="#8ecb59" /><path d="M14 14l11 13-11 13L1 27z" fill="#6f9bf0" /><path d="M27 28l13 12-13 14-13-14z" fill="#f8d970" /><path d="M22 10l18 18M28 14v26" stroke="#fff" strokeWidth="2.500" /><circle cx="28" cy="41" r="3" fill="#fff" /><circle cx="39" cy="27" r="3" fill="#fff" /></g>}
    {k === "pic" && <g><rect x="6" y="10" width="42" height="36" fill="#4f97dd" /><path d="M6 22q10-10 22-5t20-3v14H6z" fill="#d5e9f7" /><path d="M6 22q14 12 42 10v6H6z" fill="#3d7052" /><path d="M6 37h42v9H6z" fill="#4f8fae" /><path d="M4 17V8h9M41 8h9v9M50 39v9h-9M13 48H4v-9" fill="none" stroke="#2f6db4" strokeWidth="4" /></g>}
    {k === "red" && <g><defs><linearGradient id="rg" x2="0" y2="1"><stop stopColor="#c83074" /><stop offset="1" stopColor="#c23440" /></linearGradient></defs><circle cx="27" cy="27" r="25" fill="url(#rg)" /><path d="M14 18h12l6 7H20zM20 29h12l-6 8H14zM12 25h10v4H12zM29 18h9l8 9-8 10h-9l8-10z" fill="#fff" /></g>}
    {k === "xls" && <g><path d="M3 8q4-6 12-6h28v38H3z" fill="#e3efd9" stroke="#5d9e37" strokeWidth="2.500" /><path d="M10 16l40-3v37l-40-3z" fill="#f4f8f0" stroke="#74a858" /><path d="M31 18h7v6h-7zM41 18h7v6h-7zM31 28h7v6h-7zM41 28h7v6h-7zM13 38h7v6h-7zM22 38h7v6h-7zM31 38h7v7h-7zM41 38h7v8h-7z" fill="#6aa84f" /><path d="M13 14l14 20M27 14L13 34" stroke="#1e6b2c" strokeWidth="5.500" /></g>}
    {k === "cmd" && <g><rect x="3" y="6" width="48" height="41" fill="#050505" stroke="#8a8a8a" strokeWidth="1.500" /><rect x="4" y="7" width="46" height="5" fill="#aaa" /><path d="M15 18q-5-2-5 5t5 5M19 19v2M19 25v2M22 17l5 11M30 28h14" stroke="#f4f4f4" strokeWidth="2.200" fill="none" /></g>}
  </svg>
);

type SlotDef = { k: string; x: number; w: number; kind?: "open" | "hot" | "gold" };
const slots: SlotDef[] = [
  { k: "start", x: 8, w: 70 },
  { k: "explorer", x: 97, w: 90, kind: "open" },
  { k: "wmp", x: 200, w: 92 },
  { k: "ie", x: 303, w: 92 },
  { k: "putty", x: 404, w: 92 },
  { k: "pdf", x: 504, w: 83, kind: "open" },
  { k: "chrome", x: 605, w: 84, kind: "open" },
  { k: "postman", x: 706, w: 97, kind: "hot" },
  { k: "edge", x: 811, w: 92 },
  { k: "ppt", x: 912, w: 92 },
  { k: "teams", x: 1012, w: 96, kind: "open" },
  { k: "npp", x: 1113, w: 96, kind: "open" },
  { k: "git", x: 1213, w: 85, kind: "open" },
  { k: "pic", x: 1316, w: 84, kind: "open" },
  { k: "red", x: 1416, w: 98, kind: "open" },
  { k: "xls", x: 1518, w: 85, kind: "open" },
  { k: "zoom", x: 1619, w: 98, kind: "gold" },
  { k: "cmd", x: 1721, w: 89, kind: "open" },
  { k: "vvm", x: 1823, w: 96, kind: "open" },
];

function TaskBarView() {
  return (
    <Taskbar>
      {slots.map((s, i) => (
        <Slot key={s.k} $w={s.w} $kind={s.kind} $ml={i ? s.x - slots[i - 1].x - slots[i - 1].w : 0}>
          {s.k === "zoom" ? <ZoomIcon s={50} /> : s.k === "vvm" ? <VvmIcon s={50} /> : <AppIcon k={s.k} />}
        </Slot>
      ))}
      <Tray>
        <Tri d="up" c="#eef2f7" s={14} />
        <TrayIcons>
          <svg width="26" height="28" viewBox="0 0 26 28"><path d="M3 2v24" stroke="#fff" strokeWidth="3" /><path d="M5 4h9v2h10l-3 5 2 5h-9v-2H5z" fill="#fff" stroke="#445" /></svg>
          <svg width="26" height="24" viewBox="0 0 26 24"><path d="M1 8h5l6-7v22l-6-7H1z" fill="#fff" stroke="#445" /><path d="M15 7q3 5 0 10M19 4q5 8 0 16" fill="none" stroke="#fff" strokeWidth="2" /></svg>
          <svg width="26" height="22" viewBox="0 0 26 22"><path d="M2 22v-4M7.500 22v-8M13 22V10M18.500 22V6M24 22V1" stroke="#fff" strokeWidth="4" /></svg>
        </TrayIcons>
        <Clock><Label $size={20} $ls={-0.68}>7:22 PM</Label><Label $size={20} $ls={-1.05}>7/12/2021</Label></Clock>
        <ShowDesk />
      </Tray>
    </Taskbar>
  );
}

/* ---------- side panel ---------- */
const Panel = styled.aside`
  width: 808px;
  padding: 0 2px 0 6px;
  background: #000;
  display: flex;
  flex-direction: column;
  color: #656568;
`;
const Sheet = styled.section<{ $h: number; $rule?: boolean }>`
  height: ${(p) => p.$h}px;
  flex: none;
  background: #fff;
  ${(p) => p.$rule && "border-top: 2px solid #ededf0;"}
`;
const PanelTitle = styled.header<{ $h: number }>`
  height: ${(p) => p.$h}px;
  padding: 0 8px 0 24px;
  display: flex;
  align-items: center;
  svg { margin-bottom: 8px; }
`;
const TitleText = styled.div`
  flex: 1;
  text-align: center;
`;
const Search = styled.div`
  height: 60px;
  margin: 0 16px;
  border: 4px solid #a9a9a9;
  border-radius: 20px;
  display: flex;
  align-items: center;
  gap: 24px;
  padding-left: 18px;
  color: #77777c;
`;
const Person = styled.div`
  height: 68px;
  display: flex;
  align-items: center;
  padding: 0 31px 0 26px;
`;
const Face = styled.div<{ $s: number }>`
  width: ${(p) => p.$s}px;
  height: ${(p) => p.$s}px;
  flex: none;
  border-radius: 10px;
  background: #eeeef3;
  display: grid;
  place-items: center;
`;
const Name = styled.div`
  flex: 1;
  margin-left: 14px;
`;
const Status = styled.div`
  display: flex;
  align-items: center;
  gap: 11px;
`;
const ButtonsRow = styled.div`
  display: flex;
  justify-content: space-between;
  padding: 332px 66px 0;
`;
const OutlineButton = styled.button<{ $w: number }>`
  width: ${(p) => p.$w}px;
  height: 60px;
  padding: 0;
  border: 2px solid #c9c9cc;
  border-radius: 6px;
  background: #fff;
  font-family: ${OPEN};
  color: #333538;
`;
const ChatLog = styled.div`
  height: 602px;
  flex: none;
  margin: 0 -2px 0 -6px;
  border: 4px solid #468df7;
  border-right: 0;
  background: #fff;
  box-shadow: inset 2px 0 0 #000, inset -2px 0 0 #000;
  padding: 6px 0 0 30px;
`;
const From = styled.div`
  height: 36px;
  margin-bottom: 6px;
  padding-left: 80px;
  display: flex;
  align-items: center;
  gap: 11px;
  color: #4a9af5;
`;
const Message = styled.div`
  display: flex;
  gap: 16px;
`;
const Bubble = styled.div`
  width: 664px;
  height: 176px;
  border-radius: 20px;
  background: #eeeef3;
  padding: 16px 20px;
  display: flex;
  flex-direction: column;
  align-items: flex-start;
`;
const Mark = styled.div<{ $w: number }>`
  width: ${(p) => p.$w}px;
  height: 36px;
  line-height: 36px;
  white-space: pre;
  background: #b5d0f6;
`;
const WhoSees = styled.div`
  height: 42px;
  background: #f7f7fc;
  display: flex;
  align-items: center;
  justify-content: center;
  gap: 8px;
  color: #6e6e78;
  padding: 0 0 6px 2px;
`;
const ToRow = styled.div`
  height: 42px;
  display: flex;
  align-items: center;
  gap: 11px;
  padding-left: 20px;
`;
const Pill = styled.div`
  width: 164px;
  height: 42px;
  border-radius: 21px;
  background: #468df7;
  color: #fff;
  display: grid;
  place-items: center;
`;
const Placeholder = styled.div`
  padding-left: 20px;
  line-height: 38px;
  color: #747487;
`;

const UserGlyph = () => (
  <svg width="20" height="22" viewBox="0 0 20 22"><circle cx="10" cy="5.500" r="5" fill="#6b6b73" /><path d="M1 18.500c0-4 4-6 9-6s9 2 9 6q0 3-2.500 3h-13Q1 21.500 1 18.500z" fill="#6b6b73" /></svg>
);
const MicOff = () => (
  <svg width="40" height="40" viewBox="0 0 40 40">
    <rect x="12" y="0" width="16" height="28" rx="8" fill="#8e8e8e" />
    <path d="M9.500 18v3c0 6 4 10.500 10.500 10.500S30.500 27 30.500 21v-3M20 32v6" fill="none" stroke="#8e8e8e" strokeWidth="2.400" />
    <path d="M12 38.500h16" stroke="#8e8e8e" strokeWidth="3" />
    <path d="M2 40L41 1" stroke="#fff" strokeWidth="5" /><path d="M0.500 39.500L39.500 0.500" stroke="#ee4f47" strokeWidth="2.800" />
  </svg>
);
const MicOn = () => (
  <svg width="40" height="40" viewBox="0 0 40 40">
    <path d="M10 8a8 8 0 0 1 16 0v15H10z" fill="#8e8e8e" /><path d="M10 22.500h16c0 5-3 7.500-8 7.500s-8-2.500-8-7.500z" fill="#5fb82e" />
    <path d="M7 20v2c0 7 4 10.500 11 10.500S29 29 29 22v-2M18 32v6" fill="none" stroke="#8e8e8e" strokeWidth="2.400" /><path d="M10 38.500h16" stroke="#8e8e8e" strokeWidth="3" />
  </svg>
);
const CamOff = () => (
  <svg width="42" height="40" viewBox="0 0 42 40">
    <rect x="0" y="8" width="31" height="23" rx="4" fill="#8e8e8e" /><path d="M32.500 15L42 8v23l-9.500-7z" fill="#8e8e8e" />
    <path d="M3 40L42 1" stroke="#fff" strokeWidth="4.500" /><path d="M0.800 39.500L41 0.500" stroke="#ee4f47" strokeWidth="2.800" />
  </svg>
);
const ShareGlyph = () => (
  <svg width="42" height="32" viewBox="0 0 42 32"><path d="M8 23H4.500Q2 23 2 20.500v-16Q2 2 4.500 2h27Q34 2 34 4.500v16q0 2.500-2.500 2.500H28" fill="none" stroke="#74c686" strokeWidth="4" /><path d="M18 19l12 12H6z" fill="#74c686" /></svg>
);
const people: [string, number][] = [["Gopal(Me)", -0.13], ["Murtuza Mithaiwala", -0.05], ["Mukul Joshi", -0.1], ["Dilip", -0.26], ["Bhupinderpal Kaur", -0.07], ["Saravana", -0.13], ["Bharath Kadaluri", -0.06], ["Nirav Dudani", -0.12], ["Pradeep Biradar", -0.04]];
const chatLines: [string, number][] = [
  ["java -jar -Xms64m -Xmx256m -", 373],
  ["XX:+HeapDumpOnOutOfMemoryError -", 488],
  ["XX:HeapDumpPath=empapp-heapdump.bin sboot-", 624],
  ["employee-mgmt-service-0.0.1-SNAPSHOT.jar", 540],
];

function SideBar() {
  return (
    <Panel>
      <Sheet $h={1158} $rule>
        <PanelTitle $h={72}><Chev w={16} c="#4f4f54" sw={3.4} /><TitleText><Label $size={28} $weight={700}>Participants (9)</Label></TitleText></PanelTitle>
        <Search>
          <svg width="29" height="29" viewBox="0 0 29 29"><circle cx="12.500" cy="12.500" r="11" fill="none" stroke="#747484" strokeWidth="2.200" /><path d="M20.500 20.500l8 8" stroke="#747484" strokeWidth="2.400" /></svg>
          <Label $size={24}>Find a participant</Label>
        </Search>
        {people.map(([n, ls]) => (
          <Person key={n}>
            <Face $s={44}><UserGlyph /></Face>
            <Name><Label $size={24} $ls={ls}>{n}</Label></Name>
            <Status>{n === "Saravana" ? <><ShareGlyph /><MicOn /></> : <MicOff />}<CamOff /></Status>
          </Person>
        ))}
        <ButtonsRow>
          <OutlineButton $w={106}><Label $size={24} $ls={-0.25}>Invite</Label></OutlineButton>
          <OutlineButton $w={166}><Label $size={24}>Claim Host</Label></OutlineButton>
          <OutlineButton $w={134}><Label $size={24}>Unmute</Label></OutlineButton>
        </ButtonsRow>
      </Sheet>
      <Sheet $h={68} $rule>
        <PanelTitle $h={72}><Chev w={16} c="#4f4f54" sw={3.4} /><TitleText><Label $size={28} $weight={700} $ls={-0.3}>Chat</Label></TitleText></PanelTitle>
      </Sheet>
      <ChatLog>
        <From><Label $size={24} $ls={-0.13}>Saravana</Label><Label $size={24} $color="#98989c">To</Label><Label $size={24} $ls={-0.16}>Everyone</Label></From>
        <Message>
          <Face $s={48}><UserGlyph /></Face>
          <Bubble>
            {chatLines.map(([t, w]) => <Mark key={t} $w={w}><Label $size={26}>{t}</Label></Mark>)}
          </Bubble>
        </Message>
      </ChatLog>
      <Sheet $h={254}>
        <WhoSees>
          <svg width="27" height="29" viewBox="0 0 27 29"><circle cx="10" cy="7" r="5.500" fill="none" stroke="#6e6e78" strokeWidth="2" /><path d="M11 24H2.500Q0.500 24 1 21.500 3 16.500 10 16" fill="none" stroke="#6e6e78" strokeWidth="2" /><path d="M19.500 13l7 3.500v5q0 4.500-7 7-7-2.500-7-7v-5z" fill="#2f74e8" /></svg>
          <Label $size={24}>Who can see your messages?</Label>
        </WhoSees>
        <ToRow><Label $size={24} $ls={-0.32}>To:</Label><Pill><Label $size={24} $ls={-0.16}>Everyone</Label></Pill></ToRow>
        <Placeholder><Label $size={26}>Type message here ...</Label></Placeholder>
      </Sheet>
    </Panel>
  );
}

export default function App() {
  return (
    <Page>
      <GlobalStyle />
      <BrowserTop />
      <Meeting>
        <Stage>
          <Share>
            <Desktop>
              <VisualVm />
              <Postman />
              <Pointer>
                <svg width="24" height="34" viewBox="0 0 24 34"><path d="M2 2v25l6-5 4 10 5-2-4-9 9-1z" fill="#fff" stroke="#3a3034" strokeWidth="2" /></svg>
              </Pointer>
              <TaskBarView />
            </Desktop>
            <Banner>
              <BannerGreen>
                <Label $size={30}>You are viewing Saravana's screen</Label>
                <svg width="26" height="26" viewBox="0 0 26 26"><rect x="9" y="1" width="10" height="15" rx="5" fill="#3f6b35" /><path d="M6 13c1 6 14 6 15-1M14 19v4M9 24h10" fill="none" stroke="#3f6b35" strokeWidth="2.200" /><path d="M1 25L25 1" stroke="#8dc563" strokeWidth="5" /><path d="M1 25L25 1" stroke="#2f4b39" strokeWidth="1.800" /></svg>
              </BannerGreen>
              <BannerDark><Label $size={30}>View Options</Label><Chev w={23} c="#fff" sw={3} /></BannerDark>
            </Banner>
          </Share>
          <Handle />
          <Tile><Label $size={32} $weight={700}>Saravana</Label></Tile>
        </Stage>
        <SideBar />
      </Meeting>
    </Page>
  );
}
